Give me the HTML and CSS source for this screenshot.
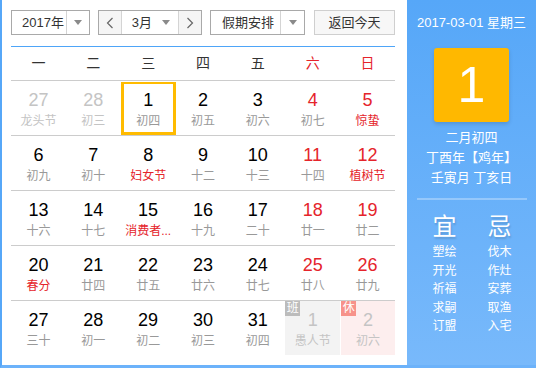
FILE: index.html
```html
<!DOCTYPE html>
<html lang="zh-CN">
<head>
  <meta charset="utf-8">
  <title>万年历</title>
  <link rel="stylesheet" href="styles.css">
</head>
<body>
  <div class="calendar">
    <div class="main">
      <div class="control">
        <div class="select year">
          <span class="select-text">2017年</span>
          <span class="select-arrow"><i class="tri"></i></span>
        </div>
        <div class="month-group">
          <span class="nav prev">
            <svg width="8" height="12" viewBox="0 0 8 12"><polyline points="6.5,1 1.5,6 6.5,11" fill="none" stroke="#666" stroke-width="1.2"/></svg>
          </span>
          <div class="month">
            <span class="select-text">3月</span>
            <i class="tri"></i>
          </div>
          <span class="nav next">
            <svg width="8" height="12" viewBox="0 0 8 12"><polyline points="1.5,1 6.5,6 1.5,11" fill="none" stroke="#666" stroke-width="1.2"/></svg>
          </span>
        </div>
        <div class="select holiday">
          <span class="select-text">假期安排</span>
          <span class="select-arrow"><i class="tri"></i></span>
        </div>
        <span class="today">返回今天</span>
      </div>

      <div class="weekdays">
        <span>一</span><span>二</span><span>三</span><span>四</span><span>五</span>
        <span class="weekend">六</span><span class="weekend">日</span>
      </div>

      <div class="week">
        <div class="day other"><b>27</b><small>龙头节</small></div>
        <div class="day other"><b>28</b><small>初三</small></div>
        <div class="day selected"><b>1</b><small>初四</small></div>
        <div class="day"><b>2</b><small>初五</small></div>
        <div class="day"><b>3</b><small>初六</small></div>
        <div class="day weekend"><b>4</b><small>初七</small></div>
        <div class="day weekend"><b>5</b><small class="fest">惊蛰</small></div>
      </div>
      <div class="week">
        <div class="day"><b>6</b><small>初九</small></div>
        <div class="day"><b>7</b><small>初十</small></div>
        <div class="day"><b>8</b><small class="fest">妇女节</small></div>
        <div class="day"><b>9</b><small>十二</small></div>
        <div class="day"><b>10</b><small>十三</small></div>
        <div class="day weekend"><b>11</b><small>十四</small></div>
        <div class="day weekend"><b>12</b><small class="fest">植树节</small></div>
      </div>
      <div class="week">
        <div class="day"><b>13</b><small>十六</small></div>
        <div class="day"><b>14</b><small>十七</small></div>
        <div class="day"><b>15</b><small class="fest">消费者...</small></div>
        <div class="day"><b>16</b><small>十九</small></div>
        <div class="day"><b>17</b><small>二十</small></div>
        <div class="day weekend"><b>18</b><small>廿一</small></div>
        <div class="day weekend"><b>19</b><small>廿二</small></div>
      </div>
      <div class="week">
        <div class="day"><b>20</b><small class="fest">春分</small></div>
        <div class="day"><b>21</b><small>廿四</small></div>
        <div class="day"><b>22</b><small>廿五</small></div>
        <div class="day"><b>23</b><small>廿六</small></div>
        <div class="day"><b>24</b><small>廿七</small></div>
        <div class="day weekend"><b>25</b><small>廿八</small></div>
        <div class="day weekend"><b>26</b><small>廿九</small></div>
      </div>
      <div class="week">
        <div class="day"><b>27</b><small>三十</small></div>
        <div class="day"><b>28</b><small>初一</small></div>
        <div class="day"><b>29</b><small>初二</small></div>
        <div class="day"><b>30</b><small>初三</small></div>
        <div class="day"><b>31</b><small>初四</small></div>
        <div class="day other work"><em class="badge">班</em><b>1</b><small>愚人节</small></div>
        <div class="day other rest"><em class="badge">休</em><b>2</b><small>初六</small></div>
      </div>
    </div>

    <div class="side">
      <div class="side-date">2017-03-01 星期三</div>
      <div class="side-day">1</div>
      <div class="side-lunar">
        <p>二月初四</p>
        <p>丁酉年【鸡年】</p>
        <p>壬寅月 丁亥日</p>
      </div>
      <hr>
      <div class="yiji">
        <div class="yiji-col">
          <h3>宜</h3>
          <p>塑绘</p><p>开光</p><p>祈福</p><p>求嗣</p><p>订盟</p>
        </div>
        <div class="yiji-col">
          <h3>忌</h3>
          <p>伐木</p><p>作灶</p><p>安葬</p><p>取渔</p><p>入宅</p>
        </div>
      </div>
    </div>
  </div>
</body>
</html>
```

FILE: styles.css
```css
* { box-sizing: border-box; }
body {
  margin: 0;
  font-family: "Liberation Sans", Arial, "Noto Sans CJK SC", sans-serif;
  color: #333;
  background: #fff;
}
.calendar {
  display: flex;
  width: 536px;
  height: 368px;
  border-left: 2px solid #56a7f8;
  border-bottom: 3px solid #6cb2fa;
}
.main {
  width: 405px;
  padding: 10px 12px 0 9px;
}

/* controls */
.control {
  display: flex;
  height: 25px;
  margin-bottom: 11px;
  font-size: 13px;
}
.select, .month-group {
  display: flex;
  border: 1px solid #a9a9a9;
  background: #fff;
}
.select-text {
  flex: 1;
  line-height: 23px;
  padding-left: 10px;
  white-space: nowrap;
}
.select-arrow {
  display: flex;
  align-items: center;
  justify-content: center;
  border-left: 1px solid #d4d4d4;
}
.tri {
  width: 0;
  height: 0;
  border-left: 4px solid transparent;
  border-right: 4px solid transparent;
  border-top: 5px solid #8a8a8a;
}
.year { width: 79px; }
.year .select-arrow { width: 23px; }
.month-group { width: 104px; margin-left: 8px; }
.nav {
  display: flex;
  align-items: center;
  justify-content: center;
  width: 22px;
  background: #f5f5f5;
}
.month {
  display: flex;
  align-items: center;
  width: 59px;
  border-left: 1px solid #d4d4d4;
  border-right: 1px solid #d4d4d4;
  padding-right: 8px;
}
.holiday { width: 95px; margin-left: 8px; }
.holiday .select-arrow { width: 24px; }
.holiday .select-text { padding-left: 11px; }
.today {
  width: 81px;
  margin-left: 9px;
  border: 1px solid #cfcfcf;
  background: #f7f7f7;
  text-align: center;
  line-height: 23px;
}

/* grid */
.weekdays {
  display: grid;
  grid-template-columns: repeat(7, 1fr);
  height: 34px;
  border-top: 1px solid #4ea5f8;
  font-size: 14px;
  line-height: 33px;
  text-align: center;
}
.weekdays .weekend { color: #e5242b; }
.week {
  display: grid;
  grid-template-columns: repeat(7, 1fr);
  border-top: 1px solid #ccc;
}
.day {
  position: relative;
  height: 54px;
  padding-top: 9px;
  text-align: center;
}
.day b {
  display: block;
  font-weight: normal;
  font-size: 18px;
  line-height: 20px;
  color: #000;
}
.day small {
  display: block;
  font-size: 12px;
  line-height: 22px;
  color: #999;
  white-space: nowrap;
}
.day.weekend b { color: #e5242b; }
.day small.fest { color: #e5242b; }
.day.other b, .day.other small { color: #c4c4c4; }
.day.selected {
  box-shadow: inset 0 1px 0 #fff, inset 0 0 0 3px #ffbb00;
}
.day.work { background: #f3f3f3; }
.day.rest { background: #fdeeee; border-left: 1px solid #fff; }
.badge {
  position: absolute;
  left: 0;
  top: 0;
  width: 15px;
  height: 15px;
  font-style: normal;
  font-size: 12px;
  line-height: 15px;
  color: #fff;
  text-align: center;
}
.work .badge { background: #bcbcbc; }
.rest .badge { background: #f7928a; }

/* side panel */
.side {
  flex: 1;
  background: linear-gradient(#56a7f8, #78b9fb);
  color: #fff;
  text-align: center;
  padding-top: 14px;
}
.side-date {
  font-size: 13px;
  line-height: 18px;
}
.side-day {
  width: 75px;
  height: 74px;
  margin: 16px auto 0;
  background: #ffb800;
  border-radius: 3px;
  box-shadow: 0 2px 4px rgba(0, 0, 0, .15);
  font-size: 50px;
  line-height: 74px;
}
.side-lunar {
  margin-top: 6px;
  font-size: 13px;
  line-height: 20px;
}
.side-lunar p { margin: 0; }
.side hr {
  margin: 10px 9px 0 10px;
  border: 0;
  height: 2px;
  background: rgba(255, 255, 255, .3);
}
.yiji {
  display: flex;
  justify-content: center;
  gap: 25px;
  padding-left: 1px;
}
.yiji-col { width: 30px; }
.yiji h3 {
  margin: 12px 0 1px;
  font-size: 24px;
  font-weight: normal;
  line-height: 30px;
  text-shadow: 1px 2px 2px rgba(0, 0, 0, .15);
}
.yiji p {
  margin: 0;
  font-size: 12px;
  line-height: 18.5px;
}
```
